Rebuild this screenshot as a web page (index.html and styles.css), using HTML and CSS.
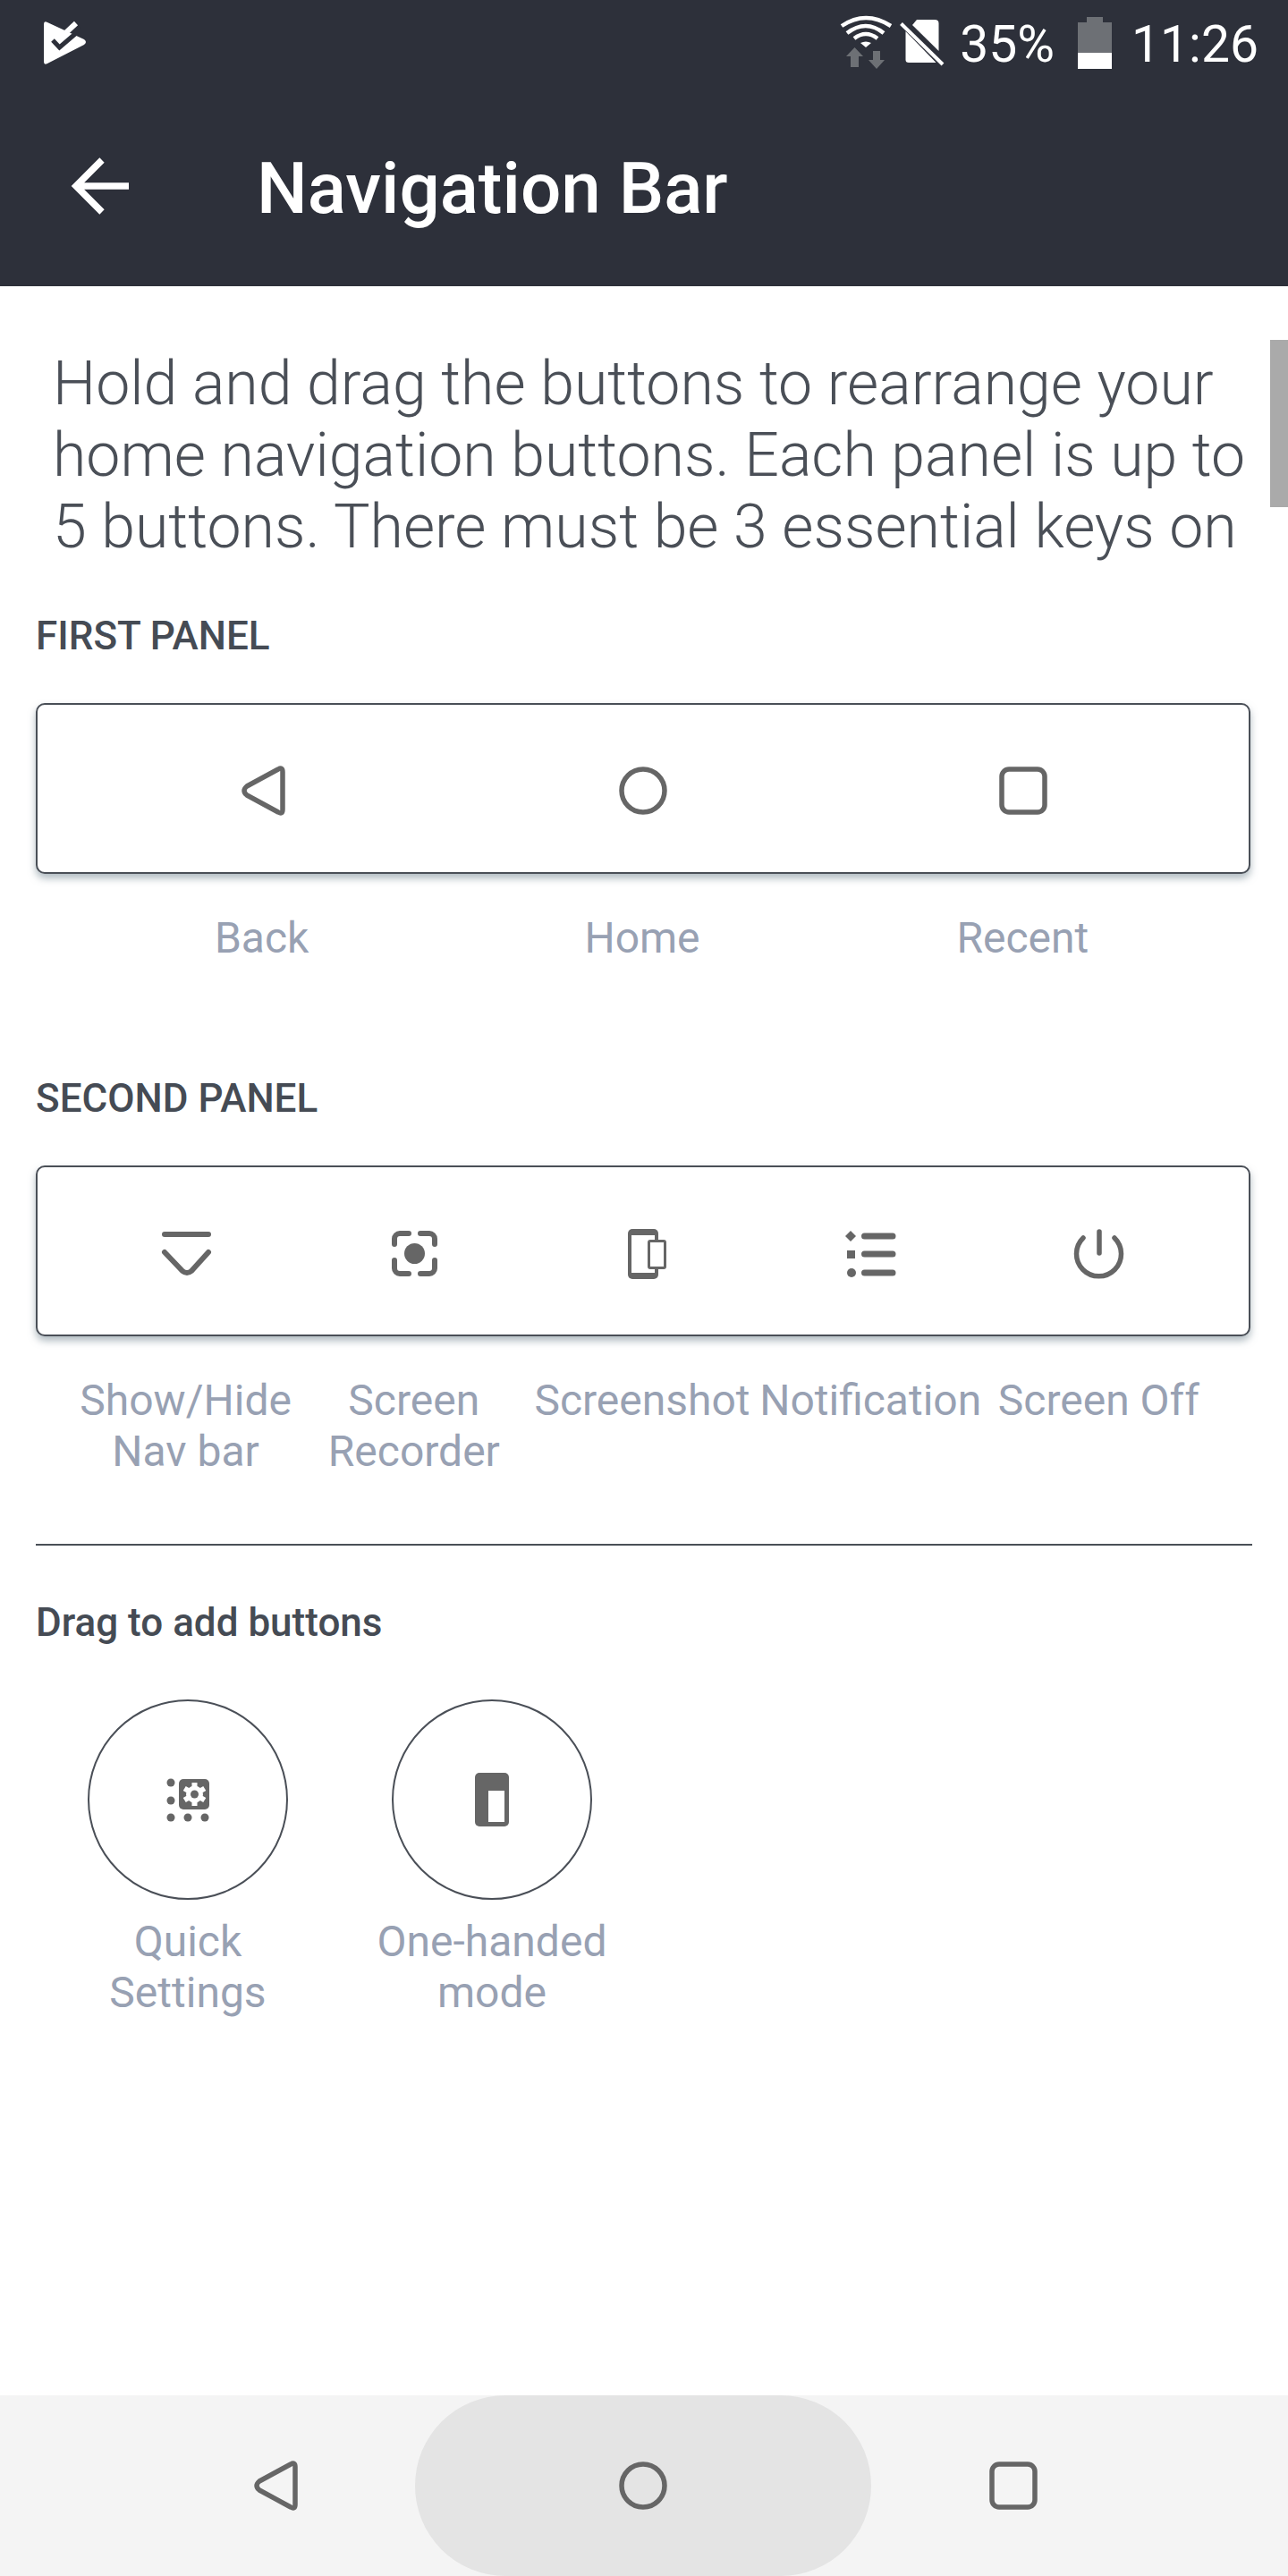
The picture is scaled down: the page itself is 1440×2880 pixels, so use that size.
FILE: index.html
```html
<!DOCTYPE html>
<html lang="en">
<head>
    <meta charset="UTF-8">
    <title>Navigation Bar</title>
    <link rel="stylesheet" href="styles.css">
</head>
<body>
    <div class="page">
        <header class="appbar">
            <div class="status">
                <svg class="logo" width="50" height="52" viewBox="20 12 50 52">
                    <path d="M20 17 Q20 13 24 15 L65 34 Q69 37 65 40 L24 61 Q20 63 20 59 Z" fill="#fff"/>
                    <path d="M30 35 L37.5 43 L62 22" fill="none" stroke="#2d303a" stroke-width="5"/>
                    <path d="M44 23 L60 19 L60 30 Z" fill="#2d303a"/>
                    <path d="M41 30 L56 16" fill="none" stroke="#fff" stroke-width="6"/>
                </svg>
                <div class="status-right">
                    <svg class="wifi" width="60" height="62" viewBox="0 0 60 62">
                        <g fill="none" stroke="#fff" stroke-width="4.5">
                            <path d="M3 13 Q30 -5 58 13"/>
                            <path d="M9 21 Q30 5 50 21"/>
                            <path d="M17 27 Q30 17 43 27"/>
                        </g>
                        <path d="M24 32 Q30 29 36 32 L30 37 Z" fill="#fff"/>
                        <path d="M17.5 37 L27 47 L22 47 L22 59 L13 59 L13 47 L8 47 Z" fill="#6d7075"/>
                        <path d="M38 41 L46 41 L46 51 L51 51 L42 61 L33 51 L38 51 Z" fill="#6d7075"/>
                    </svg>
                    <svg class="sim" width="52" height="54" viewBox="0 0 52 54">
                        <path d="M20 2 L40 2 Q44.5 2 44.5 6 L44.5 37 L15 8 Z" fill="#fff"/>
                        <path d="M7.5 15 L41.5 50 L11 50 Q7.5 50 7.5 47 Z" fill="#fff"/>
                        <path d="M2.5 6.5 L49 52" stroke="#fff" stroke-width="4"/>
                    </svg>
                    <span class="status-text">35%</span>
                    <svg class="battery" width="38" height="58" viewBox="0 0 38 58">
                        <path d="M10 0 H28 V6 H38 V40 H0 V6 H10 Z" fill="#6d7075"/>
                        <rect x="0" y="40" width="38" height="18" fill="#fff"/>
                    </svg>
                    <span class="status-text">11:26</span>
                </div>
            </div>
            <div class="toolbar">
                <svg class="back-arrow" width="72" height="76" viewBox="0 0 72 76">
                    <path d="M68 38 H10 M38 9 L9 38 L38 67" fill="none" stroke="#fff" stroke-width="7.5"/>
                </svg>
                <h1>Navigation Bar</h1>
            </div>
        </header>

        <main class="content">
            <div class="scroll-thumb"></div>
            <p class="intro">Hold and drag the buttons to rearrange your<br>home navigation buttons. Each panel is up to<br>5 buttons. There must be 3 essential keys on</p>

            <h2 class="panel-title first">FIRST PANEL</h2>
            <div class="panel">
                <div class="panel-row cols-3">
                    <svg class="icon" viewBox="0 0 72 72"><path d="M58 15 Q58 9 53 12 L18 31 Q12 36 18 41 L53 60 Q58 63 58 57 Z"/></svg>
                    <svg class="icon" viewBox="0 0 72 72"><circle cx="36" cy="36" r="24"/></svg>
                    <svg class="icon" viewBox="0 0 72 72"><rect x="12" y="12" width="48" height="48" rx="8"/></svg>
                </div>
            </div>
            <div class="labels cols-3">
                <span>Back</span>
                <span>Home</span>
                <span>Recent</span>
            </div>

            <h2 class="panel-title second">SECOND PANEL</h2>
            <div class="panel">
                <div class="panel-row cols-5">
                    <svg class="icon" viewBox="0 0 72 72">
                        <path d="M11 15 H60" stroke-width="6"/>
                        <path d="M11 35 L31 56 Q36 60 41 56 L60 35" stroke-width="6"/>
                    </svg>
                    <svg class="icon" viewBox="0 0 72 72">
                        <path d="M13 26 V20 A6 6 0 0 1 19 14 H29 M42 14 H52 A6 6 0 0 1 58 20 V26 M58 44 V53 A6 6 0 0 1 52 59 H42 M29 59 H19 A6 6 0 0 1 13 53 V44" stroke-width="6"/>
                        <circle class="solid" cx="35.5" cy="36.5" r="11.5"/>
                    </svg>
                    <svg class="icon" viewBox="0 0 72 72">
                        <rect class="solid" x="19" y="9" width="34" height="56" rx="5"/>
                        <rect class="blank" x="23" y="16" width="26" height="42"/>
                        <rect class="outlined" x="42.5" y="22.5" width="18" height="30" rx="1.5"/>
                    </svg>
                    <svg class="icon" viewBox="0 0 72 72">
                        <path class="solid" d="M13 11 L19 17 L13 23 L7 17 Z"/>
                        <rect class="solid" x="9" y="33" width="9" height="9"/>
                        <circle class="solid" cx="14" cy="58" r="5"/>
                        <path d="M28.5 17 H60 M28.5 37 H60 M28.5 58 H60" stroke-width="7"/>
                    </svg>
                    <svg class="icon" viewBox="0 0 72 72">
                        <path d="M18 19 A25 25 0 1 0 53 19" stroke-width="5.5"/>
                        <path d="M36 12 V36" stroke-width="5.5"/>
                    </svg>
                </div>
            </div>
            <div class="labels cols-5">
                <span>Show/Hide<br>Nav bar</span>
                <span>Screen<br>Recorder</span>
                <span>Screenshot</span>
                <span>Notification</span>
                <span>Screen Off</span>
            </div>

            <hr class="divider">

            <h2 class="add-title">Drag to add buttons</h2>
            <div class="add-row">
                <div class="add-item">
                    <div class="add-circle">
                        <svg class="icon" viewBox="0 0 72 72">
                            <rect class="solid" x="26" y="13" width="34" height="34" rx="5"/>
                            <circle class="solid" cx="17" cy="17" r="4.5"/>
                            <circle class="solid" cx="17" cy="37" r="4.5"/>
                            <circle class="solid" cx="17" cy="56" r="4.5"/>
                            <circle class="solid" cx="36" cy="56" r="4.5"/>
                            <circle class="solid" cx="55" cy="56" r="4.5"/>
                            <g class="gear" transform="translate(43.5 30)">
                                <rect x="-3" y="-13" width="6" height="26"/>
                                <rect x="-3" y="-13" width="6" height="26" transform="rotate(60)"/>
                                <rect x="-3" y="-13" width="6" height="26" transform="rotate(120)"/>
                                <circle r="9.5"/>
                            </g>
                            <circle class="solid" cx="43.5" cy="30" r="4.5"/>
                        </svg>
                    </div>
                    <span>Quick<br>Settings</span>
                </div>
                <div class="add-item">
                    <div class="add-circle">
                        <svg class="icon" viewBox="0 0 72 72">
                            <rect class="solid" x="17" y="6" width="38" height="60" rx="5"/>
                            <rect class="blank" x="32" y="26" width="18" height="35"/>
                        </svg>
                    </div>
                    <span>One-handed<br>mode</span>
                </div>
            </div>
        </main>

        <nav class="navbar">
            <svg class="icon" viewBox="0 0 72 72"><path d="M58 15 Q58 9 53 12 L18 31 Q12 36 18 41 L53 60 Q58 63 58 57 Z"/></svg>
            <div class="home-pill">
                <svg class="icon" viewBox="0 0 72 72"><circle cx="36" cy="36" r="24"/></svg>
            </div>
            <svg class="icon" viewBox="0 0 72 72"><rect x="12" y="12" width="48" height="48" rx="8"/></svg>
        </nav>
    </div>
</body>
</html>
```

FILE: styles.css
```css
body {
    margin: 0;
    font-family: Roboto, 'Liberation Sans', sans-serif;
    background-color: #fff;
}
.page {
    display: flex;
    flex-direction: column;
    width: 1440px;
    height: 2880px;
    overflow: hidden;
}

/* top bar */
.appbar {
    height: 320px;
    flex-shrink: 0;
    background-color: #2d303a;
    color: #fff;
}
.status {
    display: flex;
    justify-content: space-between;
    height: 96px;
    padding: 0 33px 0 49px;
}
.logo {
    margin-top: 22px;
}
.status-right {
    display: flex;
    align-items: flex-start;
}
.wifi {
    margin: 16px 7px 0 0;
}
.sim {
    margin: 20px 16px 0 0;
}
.battery {
    margin: 19px 22px 0 26px;
}
.status-text {
    font-size: 57px;
    line-height: 100px;
}
.toolbar {
    display: flex;
    align-items: center;
    height: 224px;
    padding-left: 76px;
}
.toolbar h1 {
    margin: 6px 0 0 139px;
    font-size: 80px;
    font-weight: 500;
}

/* main content */
.content {
    flex: 1;
    position: relative;
    padding: 0 40px;
}
.scroll-thumb {
    position: absolute;
    top: 60px;
    right: 0;
    width: 20px;
    height: 187px;
    background-color: #aaa;
}
.intro {
    margin: 69px 0 0 19px;
    font-size: 68px;
    font-weight: 300;
    line-height: 80px;
    color: #4a4f57;
    white-space: nowrap;
}
.panel-title {
    margin: 0;
    font-size: 44px;
    font-weight: 500;
    line-height: 48px;
    color: #454b54;
}
.panel-title.first {
    margin-top: 58px;
}
.panel-title.second {
    margin-top: 127px;
}
.panel {
    box-sizing: border-box;
    width: 1358px;
    height: 191px;
    margin-top: 51px;
    border: 2px solid #4a4f57;
    border-radius: 10px;
    background-color: #fff;
    box-shadow: 0 5px 8px rgba(110, 130, 140, 0.55);
}
.panel-row {
    display: grid;
    align-items: center;
    justify-items: center;
    box-sizing: border-box;
    height: 100%;
    padding: 5px 40px 0;
}
.cols-3 {
    grid-template-columns: repeat(3, 1fr);
}
.cols-5 {
    grid-template-columns: repeat(5, 1fr);
}
.icon {
    display: block;
    width: 72px;
    height: 72px;
    fill: none;
    stroke: #666;
    stroke-width: 5.5;
    stroke-linecap: round;
    stroke-linejoin: round;
}
.icon .solid {
    fill: #666;
    stroke: none;
}
.icon .blank {
    fill: #fff;
    stroke: none;
}
.icon .outlined {
    fill: #fff;
    stroke-width: 3;
}
.icon .gear {
    fill: #fff;
    stroke: none;
}
.labels {
    display: grid;
    justify-items: center;
    margin-top: 43px;
    padding: 0 44px 0 40px;
    font-size: 48px;
    line-height: 57px;
    text-align: center;
    color: #98a1b3;
    white-space: nowrap;
}
.divider {
    height: 2px;
    width: 1360px;
    margin: 75px 0 0;
    border: none;
    background-color: #4a4f57;
}
.add-title {
    margin: 61px 0 0;
    font-size: 44px;
    font-weight: 500;
    line-height: 50px;
    color: #454b54;
}
.add-row {
    display: flex;
    margin-top: 61px;
}
.add-item {
    display: flex;
    flex-direction: column;
    align-items: center;
    width: 340px;
    font-size: 48px;
    line-height: 57px;
    text-align: center;
    color: #98a1b3;
}
.add-circle {
    display: flex;
    align-items: center;
    justify-content: center;
    box-sizing: border-box;
    width: 224px;
    height: 224px;
    margin-bottom: 18px;
    border: 2px solid #4a4f57;
    border-radius: 50%;
}

/* bottom nav */
.navbar {
    display: flex;
    align-items: center;
    height: 202px;
    flex-shrink: 0;
    padding-left: 272px;
    background-color: #f4f4f4;
}
.home-pill {
    display: flex;
    align-items: center;
    justify-content: center;
    width: 510px;
    height: 202px;
    margin: 0 123px 0 120px;
    border-radius: 101px;
    background-color: #e4e4e4;
}
```
